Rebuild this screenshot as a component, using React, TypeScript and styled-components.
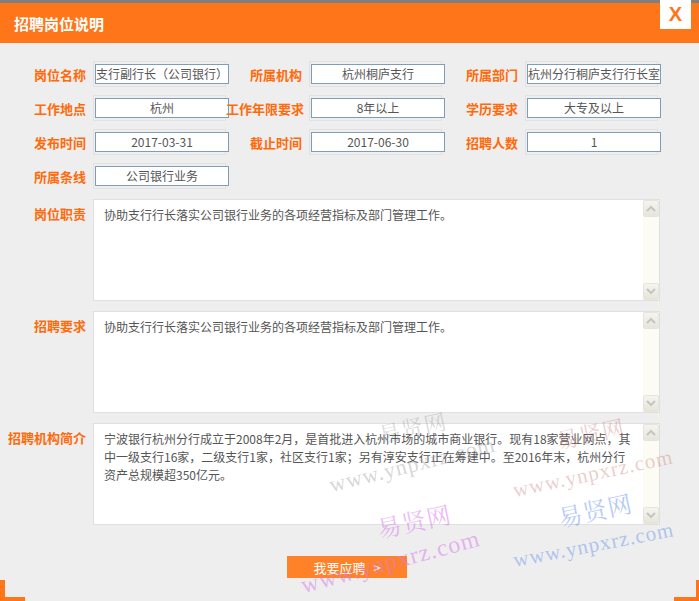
import React from "react";
import styled, { createGlobalStyle } from "styled-components";

const GlobalStyle = createGlobalStyle`
  html, body {
    margin: 0;
    padding: 0;
    background: #eeeeee;
  }
  body {
    width: 699px;
    height: 601px;
    overflow: hidden;
    font-family: "Noto Sans CJK SC", "Liberation Sans", sans-serif;
  }
`;

const Dialog = styled.div`
  position: relative;
  width: 699px;
  height: 601px;
  background: #eeeeee;
  overflow: hidden;
`;

const Header = styled.div`
  height: 40px;
  border-top: 3px solid #7f7f7f;
  background: #ff7519;
  display: flex;
  align-items: center;
  padding-left: 14px;
  color: #fff;
  font-size: 15px;
  font-weight: 700;
`;

const CloseBox = styled.div`
  position: absolute;
  top: 0;
  right: 8px;
  width: 31px;
  height: 29px;
  background: #fff;
  color: #ff7519;
  font-family: "Liberation Sans", sans-serif;
  font-weight: 700;
  font-size: 20px;
  display: flex;
  align-items: center;
  justify-content: center;
`;

const Form = styled.div`
  display: flex;
  flex-direction: column;
  padding-top: 18px;
`;

const FieldRows = styled.div`
  display: flex;
  flex-direction: column;
  gap: 8px;
`;

const Row = styled.div`
  display: flex;
`;

const Field = styled.div`
  display: flex;
  align-items: center;
`;

const Label = styled.div<{ $w: number }>`
  width: ${(p) => p.$w}px;
  text-align: right;
  color: #ff6a0a;
  font-weight: 700;
  font-size: 13px;
  white-space: nowrap;
  flex-shrink: 0;
`;

const InputFrame = styled.div`
  margin-left: 7px;
  width: 131px;
  height: 24px;
  border: 1px solid #e2e2e2;
  display: flex;
  align-items: flex-end;
`;

const Input = styled.div`
  box-sizing: border-box;
  margin-left: 1px;
  margin-bottom: 2px;
  width: 134px;
  height: 20px;
  flex-shrink: 0;
  border: 1px solid #7f9db9;
  background: #fff;
  color: #555;
  font-size: 12px;
  line-height: 18px;
  text-align: center;
  white-space: nowrap;
  overflow: hidden;
`;

const Sections = styled.div`
  display: flex;
  flex-direction: column;
  gap: 10px;
  margin-top: 10px;
`;

const Section = styled.div`
  display: flex;
  align-items: flex-start;
`;

const SectionLabel = styled(Label)`
  padding-top: 5px;
`;

const TextBox = styled.div`
  box-sizing: border-box;
  margin-left: 7px;
  width: 567px;
  height: 102px;
  border: 1px solid #e0e0e0;
  background: #fff;
  display: flex;
`;

const TextBody = styled.div`
  flex: 1;
  min-width: 0;
  padding: 6px 10px;
  color: #555;
  font-size: 12px;
  line-height: 18px;
  white-space: pre;
  overflow: hidden;
`;

const Scrollbar = styled.div`
  width: 16px;
  flex-shrink: 0;
  background: #fcfcf5;
  display: flex;
  flex-direction: column;
  justify-content: space-between;
`;

const ScrollBtn = styled.div`
  box-sizing: border-box;
  width: 16px;
  height: 17px;
  border: 1px solid #e6e5dc;
  border-radius: 2px;
  background: linear-gradient(#f5f4ef, #e6e5dd);
  display: flex;
  align-items: center;
  justify-content: center;
`;

const ButtonRow = styled.div`
  display: flex;
  padding-left: 287px;
  margin-top: 31px;
`;

const ApplyButton = styled.div`
  width: 120px;
  height: 22px;
  background: #ff8228;
  color: #fff;
  font-size: 13px;
  display: flex;
  align-items: center;
  justify-content: center;
  gap: 8px;
`;

const Corner = styled.div<{ $side: "left" | "right" }>`
  position: absolute;
  bottom: 0;
  ${(p) => p.$side}: 0;
  width: 25px;
  height: 21px;
  border-bottom: 4px solid #ff7519;
  ${(p) => (p.$side === "left" ? "border-left: 5px solid #ff7519;" : "border-right: 3px solid #ff7519;")}
  box-sizing: border-box;
`;

const Mark = styled.div<{ $c: string; $size: number; $rot?: number }>`
  position: absolute;
  color: ${(p) => p.$c};
  font-family: "Liberation Serif", "Noto Serif CJK SC", "Noto Sans CJK SC", serif;
  font-size: ${(p) => p.$size}px;
  letter-spacing: 1px;
  white-space: nowrap;
  pointer-events: none;
  transform: rotate(${(p) => p.$rot ?? -12}deg);
  transform-origin: left bottom;
`;

const Arrow = ({ up }: { up?: boolean }) => (
  <svg width="10" height="7" viewBox="0 0 10 7">
    <path
      d={up ? "M1 6 L5 2 L9 6" : "M1 1 L5 5 L9 1"}
      fill="none"
      stroke="#c5c5c0"
      strokeWidth="2"
    />
  </svg>
);

const rows: [string, string][][] = [
  [
    ["岗位名称", "支行副行长（公司银行）"],
    ["所属机构", "杭州桐庐支行"],
    ["所属部门", "杭州分行桐庐支行行长室"],
  ],
  [
    ["工作地点", "杭州"],
    ["工作年限要求", "8年以上"],
    ["学历要求", "大专及以上"],
  ],
  [
    ["发布时间", "2017-03-31"],
    ["截止时间", "2017-06-30"],
    ["招聘人数", "1"],
  ],
  [["所属条线", "公司银行业务"]],
];

const sections: [string, string][] = [
  ["岗位职责", "协助支行行长落实公司银行业务的各项经营指标及部门管理工作。"],
  ["招聘要求", "协助支行行长落实公司银行业务的各项经营指标及部门管理工作。"],
  [
    "招聘机构简介",
    "宁波银行杭州分行成立于2008年2月，是首批进入杭州市场的城市商业银行。现有18家营业网点，其\n中一级支行16家，二级支行1家，社区支行1家；另有淳安支行正在筹建中。至2016年末，杭州分行\n资产总规模超350亿元。",
  ],
];

const labelWidths = [86, 76, 76];

export default function App() {
  return (
    <Dialog>
      <GlobalStyle />
      <Header>招聘岗位说明</Header>
      <CloseBox>X</CloseBox>
      <Form>
        <FieldRows>
          {rows.map((row, i) => (
            <Row key={i}>
              {row.map(([label, value], j) => (
                <Field key={label}>
                  <Label $w={labelWidths[j]}>{label}</Label>
                  <InputFrame>
                    <Input>{value}</Input>
                  </InputFrame>
                </Field>
              ))}
            </Row>
          ))}
        </FieldRows>
        <Sections>
          {sections.map(([label, text]) => (
            <Section key={label}>
              <SectionLabel $w={86}>{label}</SectionLabel>
              <TextBox>
                <TextBody>{text}</TextBody>
                <Scrollbar>
                  <ScrollBtn>
                    <Arrow up />
                  </ScrollBtn>
                  <ScrollBtn>
                    <Arrow />
                  </ScrollBtn>
                </Scrollbar>
              </TextBox>
            </Section>
          ))}
        </Sections>
        <ButtonRow>
          <ApplyButton>
            <span>我要应聘</span>
            <span>&gt;</span>
          </ApplyButton>
        </ButtonRow>
      </Form>
      <Corner $side="left" />
      <Corner $side="right" />

      <Mark $c="rgba(150, 150, 150, 0.35)" $size={22} style={{ left: 382, top: 418 }}>易贤网</Mark>
      <Mark $c="rgba(150, 150, 150, 0.4)" $size={22} $rot={-14} style={{ left: 333, top: 472 }}>www.ynpxrz.com</Mark>
      <Mark $c="rgba(200, 110, 110, 0.35)" $size={22} style={{ left: 560, top: 424 }}>易贤网</Mark>
      <Mark $c="rgba(200, 110, 110, 0.35)" $size={21} style={{ left: 516, top: 478 }}>www.ynpxrz.com</Mark>
      <Mark $c="rgba(215, 120, 235, 0.5)" $size={24} style={{ left: 381, top: 510 }}>易贤网</Mark>
      <Mark $c="rgba(215, 120, 235, 0.5)" $size={24} $rot={-15} style={{ left: 305, top: 572 }}>www.ynpxrz.com</Mark>
      <Mark $c="rgba(110, 150, 235, 0.5)" $size={24} style={{ left: 562, top: 499 }}>易贤网</Mark>
      <Mark $c="rgba(110, 150, 235, 0.5)" $size={21} $rot={-11} style={{ left: 516, top: 548 }}>www.ynpxrz.com</Mark>
    </Dialog>
  );
}
